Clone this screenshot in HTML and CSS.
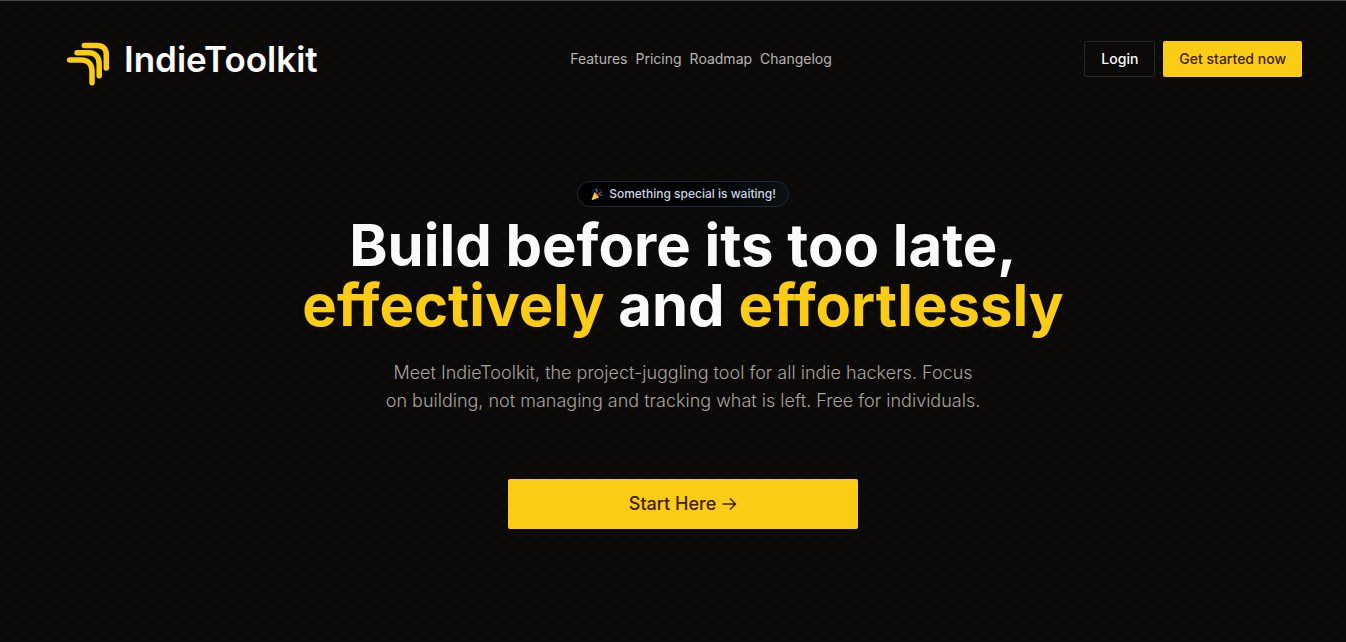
FILE: index.html
```html
<!DOCTYPE html>
<html lang="en">
<head>
<meta charset="utf-8">
<meta name="viewport" content="width=device-width, initial-scale=1">
<title>IndieToolkit</title>
<link rel="stylesheet" href="styles.css">
</head>
<body>
<header class="header">
  <a class="brand" href="#">
    <svg class="brand-mark" viewBox="-1 -4 48 48" aria-hidden="true">
      <path d="M19.300 6.600H32C38 6.600 41.300 10 41.300 15.500V29M12 13.800H23.500C30.500 13.800 34.200 18 34.200 25V36.700M4.700 21H16C23 21 27 25 27 32V43.700"/>
    </svg>
    <span class="brand-name">IndieToolkit</span>
  </a>
  <nav class="nav">
    <a href="#">Features</a>
    <a href="#">Pricing</a>
    <a href="#">Roadmap</a>
    <a href="#">Changelog</a>
  </nav>
  <div class="actions">
    <button class="button button-outline" type="button">Login</button>
    <button class="button button-primary" type="button">Get started now</button>
  </div>
</header>
<main class="hero">
  <div class="badge">
    <svg class="party" viewBox="0 0 12 12" aria-hidden="true">
      <path fill="#f9c23c" d="M3.500 4L8 9.500L1.500 12C.8 12 .5 11.500.8 10.900z"/>
      <path fill="#d88a20" d="M3.500 4C5.500 5 7.700 7.500 8 9.500C6 9 3.800 6.500 3.500 4z"/>
      <path fill="none" stroke="#2378c4" stroke-width="1.300" d="M4 .8C6.500 1 6.500 3 5.500 4.500M7.500 7C8.500 6.500 10 6.500 11 8"/>
      <path fill="none" stroke="#c8403c" stroke-width="1.200" d="M6.800 6C8.300 5.800 8 4 11 4"/>
      <path fill="#c8403c" d="M1.500 2h1v1h-1zM8.500 1.500h1v1h-1z"/>
    </svg>
    <span>Something special is waiting!</span>
  </div>
  <h1 class="title">Build before its too late,<br><em>effectively</em> and <em>effortlessly</em></h1>
  <p class="lead">Meet IndieToolkit, the project-juggling tool for all indie hackers. Focus on building, not managing and tracking what is left. Free for individuals.</p>
  <button class="start" type="button">Start Here
    <svg class="arrow" viewBox="0 0 16 16" aria-hidden="true"><path d="M1.500 8H14M9 2.500L14.500 8L9 13.500"/></svg>
  </button>
</main>
</body>
</html>
```
FILE: styles.css
```css
* { box-sizing: border-box; }
body {
  margin: 0;
  min-height: 100vh;
  border-top: 1px solid #414543;
  background-color: #0c0a09;
  background-image:
    linear-gradient(to right, #0c0a09 14px, transparent 14px),
    linear-gradient(to bottom, #0c0a09 14px, #191818 14px);
  background-position: 9px 10px;
  background-size: 16px 16px;
  color: #fafaf9;
  font-family: Inter, "Liberation Sans", sans-serif;
  font-size: 14px;
  line-height: 20px;
}
a { color: inherit; text-decoration: none; }
button { font: inherit; cursor: pointer; }
.header {
  display: flex;
  align-items: center;
  justify-content: space-between;
  padding: 34px 44px 36px;
}
.brand {
  display: flex;
  align-items: center;
  gap: 12px;
  padding-left: 20px;
}
.brand-mark {
  width: 48px;
  height: 48px;
  overflow: visible;
  fill: none;
  stroke: #facc15;
  stroke-width: 5.5;
  stroke-linecap: round;
}
.brand-name {
  font-size: 35px;
  font-weight: 600;
  line-height: 40px;
}
.nav { display: flex; gap: 8px; color: #b5b3b0; }
.actions { display: flex; gap: 8px; }
.button {
  height: 36px;
  padding: 0 16px;
  border: 1px solid transparent;
  border-radius: 2px;
  font-weight: 500;
}
.button-outline {
  border-color: #292524;
  background: #0c0a09;
  color: #fafaf9;
}
.button-primary {
  border: 0;
  background: #facc15;
  color: #422006;
}
.hero {
  display: flex;
  flex-direction: column;
  align-items: center;
  padding: 62px 24px 112px 44px;
  text-align: center;
}
.badge {
  display: flex;
  align-items: center;
  gap: 6px;
  height: 26px;
  padding: 0 12px 0 13px;
  border: 1px solid #1e293b;
  border-radius: 13px;
  background: linear-gradient(110deg, #000103 55%, #0d1114);
  color: #cbd5e1;
  font-size: 12px;
  font-weight: 500;
}
.party { width: 12px; height: 12px; }
.title {
  margin: 8px 0 0;
  font-size: 58px;
  font-weight: 700;
  line-height: 60px;
}
.title em { color: #facc15; font-style: normal; }
.lead {
  max-width: 600px;
  margin: 24px 0 64px;
  color: #a8a29e;
  font-size: 18px;
  font-weight: 300;
  line-height: 28px;
}
.start {
  display: flex;
  align-items: center;
  justify-content: center;
  gap: 5px;
  width: 350px;
  max-width: 100%;
  height: 50px;
  border: 0;
  border-radius: 2px;
  background: #facc15;
  color: #422006;
  font-size: 18px;
  font-weight: 500;
}
.arrow {
  width: 16px;
  height: 16px;
  fill: none;
  stroke: currentColor;
  stroke-width: 1.5;
}
```
